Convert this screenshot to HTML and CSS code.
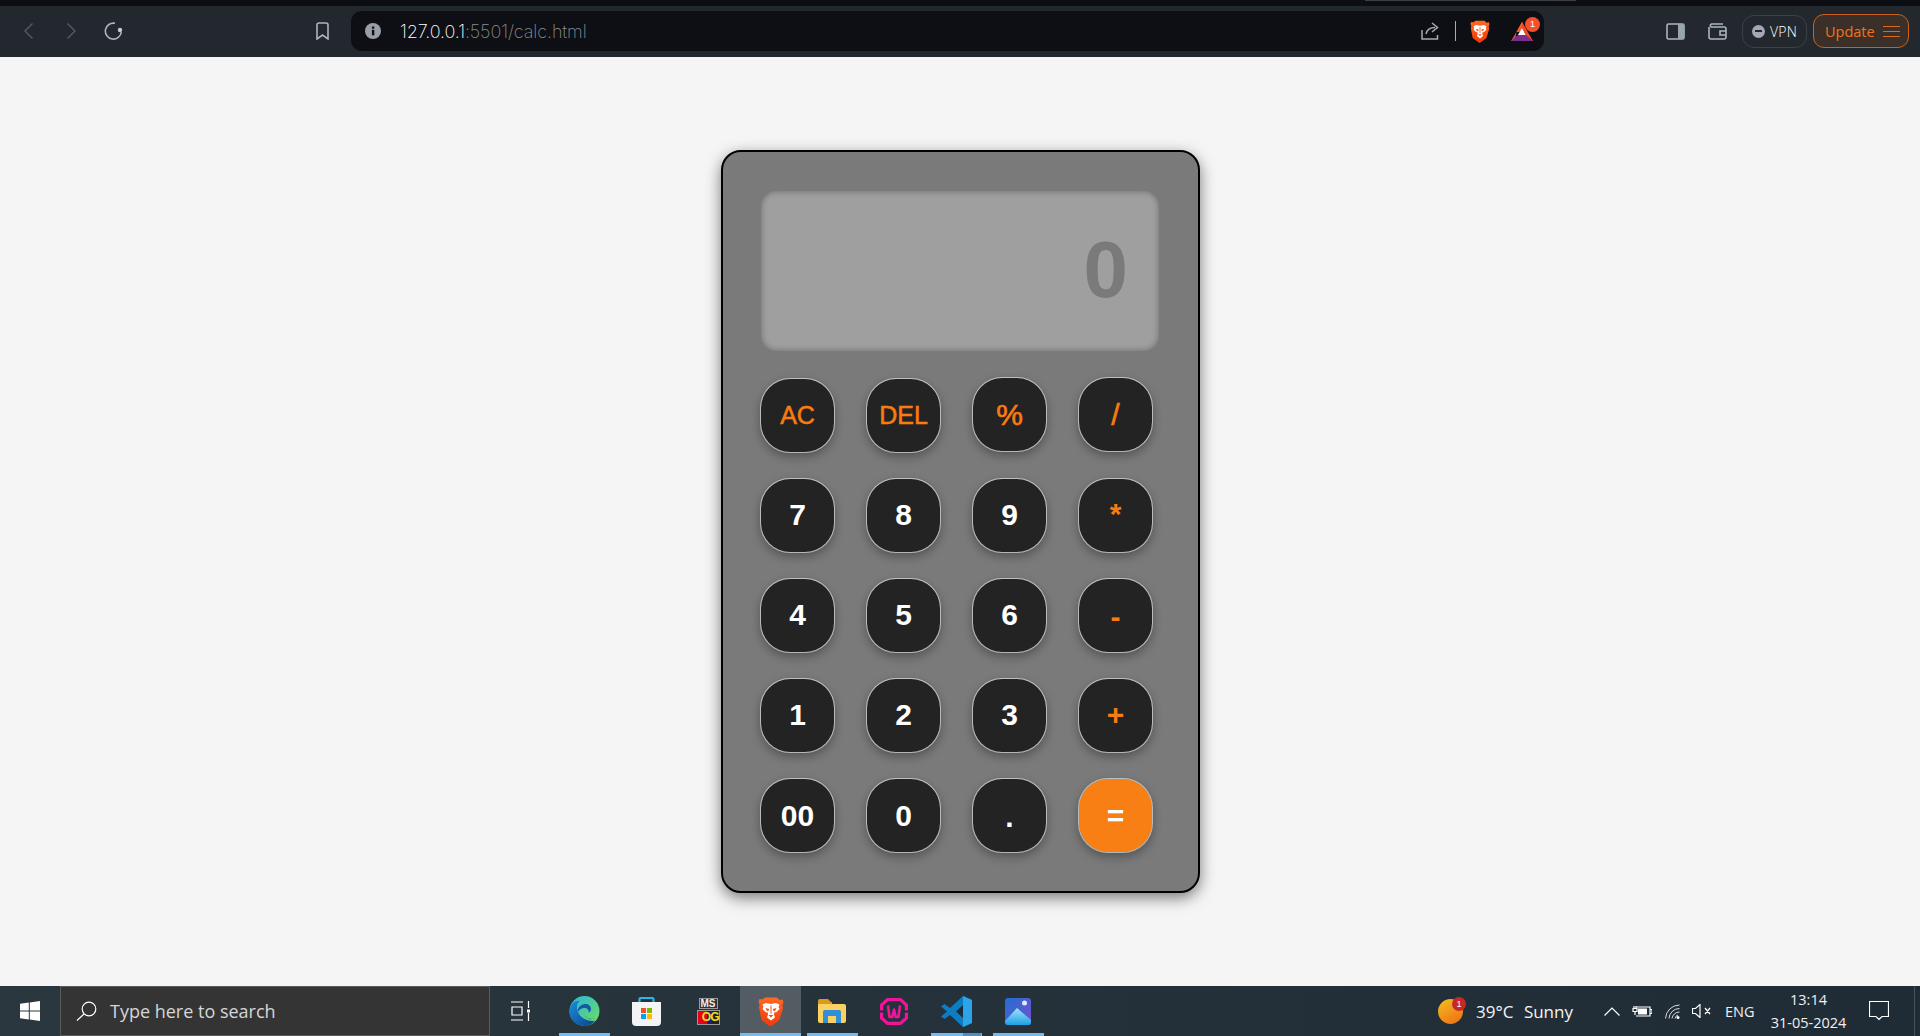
FILE: index.html
```html
<!DOCTYPE html>
<html lang="en">
<head>
<meta charset="utf-8">
<title>Calculator</title>
<link rel="stylesheet" href="styles.css">
</head>
<body>
<svg class="defs" width="0" height="0" aria-hidden="true">
  <defs>
    <linearGradient id="braveGrad" x1="0" y1="0" x2="0" y2="1"><stop offset="0" stop-color="#ff6a22"/><stop offset="1" stop-color="#f0380c"/></linearGradient>
    <symbol id="brave" viewBox="0 0 26 30">
      <path fill="url(#braveGrad)" d="M7 1h12l2.500 2.500 3-.5 1 2.500-1 3 .5 3-3.500 12-6.500 5-2.500 1.500-2.500-1.500-6.500-5L1 11l.5-3-1-3 1-2.500 3 .5z"/>
      <path fill="#fff" d="M8 6.500l5 1 5-1 3.500 1.500-1 2.500 1 2-3.500 3.500-1.500-.5-.5 2.500 1 3-4 3-4-3 1-3-.5-2.500-1.500.5-3.500-3.500 1-2-1-2.500z"/>
      <path fill="#f4500f" d="M7.500 11.500l3.500 1v1.500l-2 .5zM18.500 11.500l-3.500 1v1.500l2 .5zM10.500 18.500h5l-2.500 2.500zM12.500 9h1v8h-1z"/>
    </symbol>
  </defs>
</svg>

<div class="tabstrip"><span class="tab-line"></span></div>

<header class="toolbar">
  <svg class="i-chev" viewBox="0 0 9 16"><path d="M8.500.5L1 8l7.500 7.500" class="dim"/></svg>
  <svg class="i-chev i-fwd" viewBox="0 0 9 16"><path d="M.5.5L8 8 .5 15.500" class="dim"/></svg>
  <svg class="i-reload" viewBox="0 0 19 18"><path d="M11 1.300A8 8 0 1 0 17.300 10" class="line"/><circle cx="16" cy="8" r="2.200" fill="#c3ced2"/></svg>
  <svg class="i-bookmark" viewBox="0 0 13 18"><path d="M1 3a2 2 0 0 1 2-2h7a2 2 0 0 1 2 2v14l-5.500-4L1 17z" class="line"/></svg>
  <div class="urlbar">
    <svg class="i-info" viewBox="0 0 16 16"><circle cx="8" cy="8" r="8" fill="#9a9ea6"/><rect x="6.900" y="6.800" width="2.400" height="5.500" fill="#0d0f14"/><rect x="6.900" y="3.500" width="2.400" height="2.200" fill="#0d0f14"/></svg>
    <span class="url"><span class="url-host">127.0.0.1</span>:5501/calc.html</span>
    <svg class="i-share" viewBox="0 0 18 18"><path d="M1 8v9h15.500v-4M5 12c1-4.500 4-6.500 9-6.500M11 1l5.500 4.500L11 10" class="line-soft"/></svg>
    <span class="url-div"></span>
    <svg class="i-brave"><use href="#brave"/></svg>
    <span class="bat">
      <svg class="i-bat" viewBox="0 0 22 19"><path fill="#f4502a" d="M11 0l5.500 10H5.500z"/><path fill="#f4502a" d="M5.500 10L0 19h4z"/><path fill="#ff5a2e" d="M5.500 10L11 0v3l-4 7z"/><path fill="#fff" d="M11 6l4 7H7z"/><path fill="#ef4a24" d="M11 0l11 19h-4L11 6z"/><path fill="#7a2f8f" d="M0 19l7-6h8l7 6z"/></svg>
      <span class="bat-badge">1</span>
    </span>
  </div>
  <svg class="i-panel" viewBox="0 0 19 17"><rect x="1" y="1" width="17" height="15" rx="1.500" class="line"/><rect x="12" y="1" width="6" height="15" fill="#97a6ad"/></svg>
  <svg class="i-wallet" viewBox="0 0 19 17"><path d="M3 1h12M1 4v10a2 2 0 0 0 2 2h13a2 2 0 0 0 2-2V6a2 2 0 0 0-2-2H3a2 2 0 0 1 0-3M18 8h-6v4h6" class="line"/></svg>
  <div class="vpn"><span class="vpn-dot"><span class="vpn-bar"></span></span><span>VPN</span></div>
  <div class="update"><span>Update</span><span class="burger"><i></i><i></i><i></i></span></div>
</header>

<main class="page">
  <section class="calc">
    <div class="screen">0</div>
    <div class="keys">
      <button class="key op small">AC</button>
      <button class="key op small">DEL</button>
      <button class="key op raised thin">%</button>
      <button class="key op raised thin">/</button>
      <button class="key up">7</button>
      <button class="key up">8</button>
      <button class="key up">9</button>
      <button class="key op up2">*</button>
      <button class="key up">4</button>
      <button class="key up">5</button>
      <button class="key up">6</button>
      <button class="key op down">-</button>
      <button class="key up">1</button>
      <button class="key up">2</button>
      <button class="key up">3</button>
      <button class="key op up">+</button>
      <button class="key">00</button>
      <button class="key">0</button>
      <button class="key down">.</button>
      <button class="key equals">=</button>
    </div>
  </section>
</main>

<footer class="taskbar">
  <div class="start">
    <svg class="i-win" viewBox="0 0 20 20"><path fill="#fff" d="M0 2.800l8.800-1.200v8H0zM9.800 1.400L20 0v9.600H9.800zM0 10.600h8.800v8L0 17.300zM9.800 10.600H20V20L9.800 18.600z"/></svg>
  </div>
  <div class="search">
    <svg class="i-search" viewBox="0 0 21 20"><circle cx="13" cy="8" r="6.800" class="line-white"/><path d="M8 13L1 19.500" class="line-white"/></svg>
    <span>Type here to search</span>
  </div>
  <svg class="i-taskview" viewBox="0 0 20 20"><path d="M1 1h12M1 19h12M2 6h10v8H2zM18.500 0v7M18.500 12v8" class="line-white"/><rect x="17" y="8.500" width="3" height="3" fill="#fff"/></svg>
  <div class="app open">
    <svg class="i-31" viewBox="0 0 31 30">
      <defs><linearGradient id="edgeA" x1="0" y1="0" x2="1" y2="1"><stop offset="0" stop-color="#2bb5e0"/><stop offset="1" stop-color="#6fe05a"/></linearGradient><linearGradient id="edgeB" x1="0" y1="0" x2="1" y2="1"><stop offset="0" stop-color="#1a8fd8"/><stop offset="1" stop-color="#0c3f8f"/></linearGradient></defs>
      <circle cx="15.500" cy="15" r="15" fill="url(#edgeA)"/>
      <path fill="url(#edgeB)" d="M.5 15C1 8 6 4 11 5c-3 2-4 6-2 11 2.500 6 9 9 15 9 1 0 2-.5 2.500-1-2.500 3.500-6 6-11 6C7 30 0 23 .5 15z"/>
      <path fill="#1758a8" d="M9 16c-1-4 3-8 7-8 3.500 0 6 2 6 5 0 2-1 3-2.500 3.500 .5-2-.5-4-3-4.500-3-.5-6 1-7.500 4z"/>
      <path fill="#0e3a80" d="M15 18c1 3 4 5 8 5 1.500 0 2.500-.5 3.500-1-2 1-4 1.500-6 1-3-.8-5-3-5.500-5z"/>
    </svg>
  </div>
  <div class="app">
    <svg class="i-29" viewBox="0 0 29 29">
      <path d="M7.500 7V2.500A1.500 1.500 0 0 1 9 1h11a1.500 1.500 0 0 1 1.500 1.500V7" fill="none" stroke="#29b6e8" stroke-width="2.200"/>
      <path fill="#f4f4f4" d="M0 5h29v20a4 4 0 0 1-4 4H4a4 4 0 0 1-4-4z"/>
      <rect x="9" y="11" width="5" height="5" fill="#f25022"/><rect x="15" y="11" width="5" height="5" fill="#7fba00"/><rect x="9" y="17" width="5" height="5" fill="#00a4ef"/><rect x="15" y="17" width="5" height="5" fill="#ffb900"/>
    </svg>
  </div>
  <div class="app">
    <div class="msdos">
      <span class="ms-top">MS</span>
      <span class="ms-bot">OG</span>
    </div>
  </div>
  <div class="app app-brave open">
    <svg class="i-brave-task"><use href="#brave"/></svg>
  </div>
  <div class="app open">
    <svg class="i-folder" viewBox="0 0 28 24"><path fill="#d99a1e" d="M0 2a2 2 0 0 1 2-2h8l3 3h1v5H0z"/><path fill="#fbd162" d="M0 5h26a2 2 0 0 1 2 2v15a2 2 0 0 1-2 2H2a2 2 0 0 1-2-2z"/><path fill="#2f8fd8" d="M5 24V13a2 2 0 0 1 2-2h14a2 2 0 0 1 2 2v11h-5v-7h-8v7z"/></svg>
  </div>
  <div class="app">
    <svg class="i-wamp" viewBox="0 0 28 27"><path fill="none" stroke="#f0149a" stroke-width="3.200" d="M7.500 1.600h13L26.400 7v13l-5.900 5.400h-13L1.600 20V7z"/><path fill="#1f2c34" d="M0 12.500h4v2H0zM24 12.500h4v2h-4z"/><path fill="none" stroke="#f0149a" stroke-width="2.600" stroke-linejoin="round" d="M8 7.500l1.500 11.500h2.800l1.700-7.500 1.700 7.500h2.800L20 7.500"/></svg>
  </div>
  <div class="app open open-more">
    <svg class="i-code" viewBox="0 0 31 31"><path fill="#0f7cc0" d="M22 0l9 4v23l-9 4L9 19l-5.500 4L0 20.500 6 15.500 0 10.500 3.500 8 9 12z"/><path fill="#2aa5ea" d="M22 0l9 4v23l-9 4z"/><path fill="#1b2d38" d="M22 9l-7 6.500 7 6.500z"/></svg>
  </div>
  <div class="app open">
    <svg class="i-photos" viewBox="0 0 26 27">
      <defs><linearGradient id="phBg" x1="0" y1="0" x2="1" y2="1"><stop offset="0" stop-color="#1f6fd0"/><stop offset="1" stop-color="#7a4fd0"/></linearGradient><linearGradient id="phM" x1="0" y1="0" x2="0" y2="1"><stop offset="0" stop-color="#9fe6f8"/><stop offset="1" stop-color="#1f9fe6"/></linearGradient></defs>
      <rect width="26" height="27" rx="3" fill="url(#phBg)"/>
      <circle cx="19.500" cy="5" r="2.500" fill="#e8e6f8"/>
      <path fill="url(#phM)" d="M0 23l12-13 14 12v2a3 3 0 0 1-3 3H3a3 3 0 0 1-3-3z"/>
    </svg>
  </div>

  <div class="tray">
    <div class="weather"><span class="sun"></span><span class="sun-badge">1</span></div>
    <div class="weather-text"><span>39°C</span><span>Sunny</span></div>
    <svg class="i-up" viewBox="0 0 16 9"><path d="M.5 8.500L8 1l7.500 7.500" class="line-white"/></svg>
    <svg class="i-batt" viewBox="0 0 20 12"><path d="M4 2h14v9H4M18 4.500h2v4h-2" class="line-white" /><rect x="6" y="3.500" width="9" height="6" fill="#fff"/><path d="M1 3.500h4v3H1zM2 1v2M4 1v2M3 6.500V10" class="line-white"/></svg>
    <svg class="i-wifi" viewBox="0 0 15 15"><path d="M.5 14.500A14 14 0 0 1 14.500 1M4 14.500A10.500 10.500 0 0 1 14.500 4.500M7 14.500A7.500 7.500 0 0 1 14.500 8M10 14.500A4.500 4.500 0 0 1 13 11" class="line-soft-w"/><circle cx="13" cy="13.500" r="1.500" fill="#fff"/></svg>
    <svg class="i-vol" viewBox="0 0 19 14"><path d="M.5 4.500h3L8 .5v13l-4.500-4h-3zM13 4l5 6M18 4l-5 6" class="line-white"/></svg>
    <span class="lang">ENG</span>
    <div class="clock"><span>13:14</span><span>31-05-2024</span></div>
    <svg class="i-notif" viewBox="0 0 20 20"><path d="M.5.5h19v15h-6.500L10 18.500 7 15.500H.5z" class="line-white"/></svg>
    <span class="desk-sliver"></span>
  </div>
</footer>
</body>
</html>
```

FILE: styles.css
```css
* { box-sizing: border-box; }
html, body { margin: 0; padding: 0; }
body {
  width: 1920px;
  height: 1036px;
  overflow: hidden;
  display: flex;
  flex-direction: column;
  background: #f5f5f5;
  font-family: "Liberation Sans", Arial, sans-serif;
}
svg { display: block; flex: none; }
.defs { position: absolute; }

.dim { fill: none; stroke: #555c62; stroke-width: 1.400; }
.line { fill: none; stroke: #a9b6bb; stroke-width: 1.600; }
.line-soft { fill: none; stroke: #a8abb0; stroke-width: 1.500; }
.line-white { fill: none; stroke: #fff; stroke-width: 1.200; }
.line-soft-w { fill: none; stroke: #d8dcde; stroke-width: 1; }

/* browser chrome */
.tabstrip { height: 6px; flex: none; background: #0c0e13; padding-left: 1365px; }
.tab-line { display: block; width: 211px; height: 1px; background: #3c4045; }

.toolbar {
  height: 51px;
  flex: none;
  display: flex;
  align-items: center;
  padding: 0 0 1px 24px;
  background: #22282d;
}
.i-chev { width: 9px; height: 16px; }
.i-fwd { margin-left: 34px; }
.i-reload { width: 19px; height: 18px; margin-left: 28px; }
.i-bookmark { width: 13px; height: 18px; margin-left: 193px; }

.urlbar {
  width: 1193px;
  height: 40px;
  margin-left: 22px;
  padding: 0 11px 0 14px;
  display: flex;
  align-items: center;
  background: #0d0f14;
  border-radius: 11px;
}
.i-info { width: 16px; height: 16px; }
.url {
  margin-left: 19px;
  font: 200 18px "Inter", sans-serif;
  letter-spacing: -0.1px;
  color: #8a8d92;
}
.url-host { color: #fff; }
.i-share { width: 18px; height: 18px; margin-left: auto; }
.url-div { width: 1px; height: 20px; margin-left: 16px; background: #a8abb0; }
.i-brave { width: 20px; height: 23px; margin-left: 14px; }
.bat { margin-left: 21px; width: 22px; height: 19px; position: relative; }
.i-bat { width: 22px; height: 19px; }
.bat-badge {
  position: absolute;
  top: -5px;
  left: 14px;
  width: 15px;
  height: 15px;
  border-radius: 50%;
  background: #f4502a;
  color: #fff;
  font: 9px/15px "Liberation Sans", sans-serif;
  text-align: center;
}
.i-panel { width: 19px; height: 17px; margin-left: 122px; }
.i-wallet { width: 19px; height: 17px; margin-left: 23px; }
.vpn {
  width: 65px;
  height: 33px;
  margin-left: 15px;
  padding-left: 9px;
  display: flex;
  align-items: center;
  gap: 5px;
  border: 1px solid #3a4248;
  border-radius: 12px;
  color: #fff;
  font: 300 14px "Open Sans", sans-serif;
  letter-spacing: 0.2px;
}
.vpn-dot {
  width: 13px;
  height: 13px;
  border-radius: 50%;
  background: #a5a8b4;
  display: flex;
  align-items: center;
  justify-content: center;
}
.vpn-bar { width: 7px; height: 2px; background: #22282d; }
.update {
  width: 96px;
  height: 34px;
  margin-left: 6px;
  padding: 0 8px 0 11px;
  display: flex;
  align-items: center;
  justify-content: space-between;
  background: #3a3029;
  border: 1.500px solid #c8611a;
  border-radius: 11px;
  color: #f5701a;
  font: 400 14.500px "Open Sans", sans-serif;
}
.burger { display: flex; flex-direction: column; gap: 4px; width: 17px; }
.burger i { display: block; height: 1px; background: #d9691f; }

/* calculator page */
.page {
  flex: 1;
  display: flex;
  justify-content: center;
  align-items: center;
  padding-left: 1px;
}
.calc {
  width: 479px;
  height: 743px;
  padding: 39px 45px 38px 37px;
  background: #7a7a7a;
  border: 2px solid #000;
  border-radius: 20px;
  box-shadow: 0 5px 15px rgba(0, 0, 0, 0.5);
}
.screen {
  width: 398px;
  height: 160px;
  margin: 0 0 27px 1px;
  padding: 0 31px 2px 0;
  display: flex;
  align-items: center;
  justify-content: flex-end;
  background: #9f9f9f;
  border-radius: 15px;
  box-shadow: inset 0 0 6px rgba(0, 0, 0, 0.35);
  color: #7a7a7a;
  font: 700 80px "Liberation Sans", sans-serif;
}
.keys {
  display: grid;
  grid-template-columns: repeat(4, 75px);
  grid-auto-rows: 75px;
  column-gap: 31px;
  row-gap: 25px;
}
.key {
  width: 75px;
  height: 75px;
  padding: 0;
  background: #232323;
  background-clip: padding-box;
  border: 1px solid rgba(255, 255, 255, 0.55);
  border-radius: 30px;
  box-shadow: 0 4px 10px rgba(0, 0, 0, 0.3);
  color: #fff;
  font: 700 30px "Liberation Sans", sans-serif;
}
.op { color: #f97c10; }
.small { font-size: 25px; font-weight: 400; -webkit-text-stroke: 0.5px #f97c10; }
.thin { font-weight: 400; -webkit-text-stroke: 0.6px #f97c10; }
.raised { margin-top: -1px; margin-bottom: 1px; }
.up { padding-bottom: 2px; }
.up2 { padding-bottom: 4px; }
.down { padding-top: 3px; }
.equals { background-color: #f77f14; }

/* taskbar */
.taskbar {
  height: 50px;
  flex: none;
  display: flex;
  align-items: center;
  background: linear-gradient(90deg, #2a373e, #1f2c36);
  color: #fff;
  font-family: "Open Sans", sans-serif;
}
.start { width: 60px; height: 50px; display: flex; align-items: center; justify-content: center; }
.i-win { width: 20px; height: 20px; }
.search {
  width: 430px;
  height: 50px;
  padding-left: 15px;
  display: flex;
  align-items: center;
  gap: 13px;
  background: #343434;
  border: 1px solid #5a5a5a;
  color: #d6d6d6;
  font-size: 18px;
}
.i-search { width: 21px; height: 20px; }
.i-taskview { width: 20px; height: 20px; margin: 0 23px 0 20px; }

.app {
  width: 62px;
  height: 50px;
  flex: none;
  position: relative;
  display: flex;
  align-items: center;
  justify-content: center;
}
.open::after {
  content: "";
  position: absolute;
  left: 5.500px;
  bottom: 0;
  width: 51px;
  height: 3px;
  background: #76b9ed;
}
.open-more::before {
  content: "";
  position: absolute;
  left: 38px;
  bottom: 0;
  width: 18px;
  height: 3px;
  z-index: 1;
  background: #4f8fc0;
}
.app-brave {
  width: 61px;
  margin-left: 1px;
  background: #525c62;
}
.app-brave::after { left: 0; width: 61px; }
.i-31 { width: 31px; height: 30px; }
.i-29 { width: 29px; height: 29px; }
.i-brave-task { width: 26px; height: 31px; }
.i-folder { width: 28px; height: 24px; }
.i-wamp { width: 28px; height: 27px; }
.i-code { width: 31px; height: 31px; }
.i-photos { width: 26px; height: 27px; }

.msdos { width: 23px; display: flex; flex-direction: column; align-items: center; gap: 1px; }
.ms-top {
  width: 19px;
  height: 11px;
  background: #333;
  border: 1px solid #999;
  color: #eee;
  font: 700 10px/9px "Liberation Sans", sans-serif;
  text-align: center;
}
.ms-bot {
  width: 23px;
  height: 15px;
  background: linear-gradient(90deg, #e8001c 45%, #1a1a8a 45%, #1a1a8a 65%, #222 65%);
  border: 1px solid #999;
  color: #f0e010;
  font: 700 12px/13px "Liberation Sans", sans-serif;
  text-align: right;
  letter-spacing: -1px;
}

.tray { margin-left: auto; padding-right: 5px; display: flex; align-items: center; }
.weather { width: 28px; height: 26px; position: relative; }
.sun {
  display: block;
  width: 25px;
  height: 25px;
  margin-top: 1px;
  border-radius: 50%;
  background: linear-gradient(150deg, #f4c020, #ee6a14);
}
.sun-badge {
  position: absolute;
  top: -1px;
  left: 14px;
  width: 14px;
  height: 14px;
  border-radius: 50%;
  background: #c62828;
  color: #fff;
  font: 9px/14px "Liberation Sans", sans-serif;
  text-align: center;
}
.weather-text {
  width: 97px;
  margin-left: 10px;
  display: flex;
  justify-content: space-between;
  font-size: 17px;
  color: #f4f4f4;
}
.i-up { width: 16px; height: 9px; margin-left: 31px; }
.i-batt { width: 20px; height: 12px; margin-left: 12px; }
.i-wifi { width: 15px; height: 15px; margin-left: 13px; }
.i-vol { width: 19px; height: 14px; margin-left: 12px; }
.lang { width: 28px; margin-left: 14px; font-size: 14.500px; white-space: nowrap; color: #f0f0f0; }
.clock {
  width: 75px;
  margin-left: 18px;
  display: flex;
  flex-direction: column;
  align-items: center;
  gap: 5px;
  font-size: 14.500px;
  line-height: 18px;
  color: #f0f0f0;
  white-space: nowrap;
}
.i-notif { width: 20px; height: 20px; margin-left: 23px; }
.desk-sliver { width: 1px; height: 50px; margin-left: 25px; background: #44525a; }
```
